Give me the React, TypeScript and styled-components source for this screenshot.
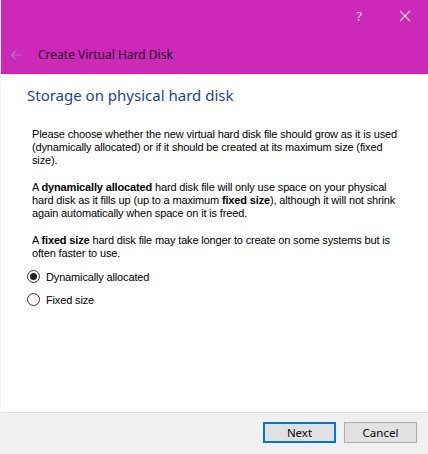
import React from "react";
import styled, { createGlobalStyle } from "styled-components";

const Global = createGlobalStyle`
  html, body { margin: 0; padding: 0; background: #ffffff; }
  * { box-sizing: border-box; }
`;

const Window = styled.div`
  width: 428px;
  height: 454px;
  display: flex;
  flex-direction: column;
  background: #ffffff;
  border-left: 1px solid #f4f4f4;
  font-family: "Liberation Sans", Arial, sans-serif;
`;

const Header = styled.div`
  height: 74px;
  background: #cc29b9;
  display: flex;
  flex-direction: column;
`;

const TopBar = styled.div`
  height: 31px;
  display: flex;
  justify-content: flex-end;
  align-items: center;
`;

const CaptionButton = styled.div`
  width: 46px;
  height: 31px;
  display: flex;
  align-items: center;
  justify-content: center;
  color: #f6d3f0;
  font-family: "Noto Sans", sans-serif;
  font-size: 13px;
`;

const TitleRow = styled.div`
  flex: 1;
  display: flex;
  align-items: center;
  padding-left: 9px;
  padding-top: 4px;
  gap: 16px;
`;

const Title = styled.div`
  font-family: "Noto Sans", sans-serif;
  font-size: 12px;
  color: #1e0a1c;
`;

const Content = styled.div`
  flex: 1;
  display: flex;
  flex-direction: column;
  padding: 10px 12px 0 26px;
`;

const Heading = styled.h1`
  margin: 0;
  font-family: "Noto Sans", sans-serif;
  font-weight: 400;
  font-size: 15px;
  line-height: 22px;
  color: #1c4591;
`;

const Body = styled.div`
  padding-left: 5px;
  padding-top: 22px;
  display: flex;
  flex-direction: column;
  gap: 14px;
`;

const Para = styled.p`
  margin: 0;
  font-size: 11px;
  line-height: 13px;
  color: #000;
  letter-spacing: -0.15px;
  white-space: nowrap;
`;

const RadioGroup = styled.div`
  display: flex;
  flex-direction: column;
  gap: 10px;
  padding-top: 10px;
`;

const RadioRow = styled.label`
  display: flex;
  align-items: center;
  gap: 6px;
  font-size: 11px;
  letter-spacing: -0.15px;
  color: #000;
  height: 13px;
`;

const RadioCircle = styled.span<{ $checked?: boolean }>`
  width: 13px;
  height: 13px;
  border-radius: 50%;
  border: 1px solid #333;
  background: #fff;
  display: flex;
  align-items: center;
  justify-content: center;
  &::after {
    content: "";
    width: 7px;
    height: 7px;
    border-radius: 50%;
    background: #222;
    display: ${(p) => (p.$checked ? "block" : "none")};
  }
`;

const Footer = styled.div`
  height: 42px;
  background: #f0f0f0;
  border-top: 1px solid #dfdfdf;
  display: flex;
  justify-content: flex-end;
  align-items: flex-start;
  gap: 8px;
  padding-right: 11px;
  padding-top: 9px;
`;

const Button = styled.button<{ $primary?: boolean }>`
  width: 73px;
  height: 21px;
  background: #e1e1e1;
  border: ${(p) => (p.$primary ? "2px solid #0078d7" : "1px solid #adadad")};
  font-family: "Noto Sans", sans-serif;
  font-size: 11.5px;
  color: #000;
  padding: 0;
  display: flex;
  align-items: center;
  justify-content: center;
`;

export default function App() {
  return (
    <>
      <Global />
      <Window>
        <Header>
          <TopBar>
            <CaptionButton>?</CaptionButton>
            <CaptionButton>
              <svg width="12" height="12" viewBox="0 0 12 12">
                <path d="M1 1L11 11M11 1L1 11" stroke="#f6d3f0" strokeWidth="1.2" />
              </svg>
            </CaptionButton>
          </TopBar>
          <TitleRow>
            <svg width="12" height="10" viewBox="0 0 12 10">
              <path d="M11.5 5H1.5M5.5 1L1.5 5L5.5 9" stroke="#b07aa8" strokeWidth="1.1" fill="none" />
            </svg>
            <Title>Create Virtual Hard Disk</Title>
          </TitleRow>
        </Header>
        <Content>
          <Heading>Storage on physical hard disk</Heading>
          <Body>
            <Para>
              Please choose whether the new virtual hard disk file should grow as it is used
              <br />
              (dynamically allocated) or if it should be created at its maximum size (fixed
              <br />
              size).
            </Para>
            <Para>
              A <b>dynamically allocated</b> hard disk file will only use space on your physical
              <br />
              hard disk as it fills up (up to a maximum <b>fixed size</b>), although it will not shrink
              <br />
              again automatically when space on it is freed.
            </Para>
            <Para>
              A <b>fixed size</b> hard disk file may take longer to create on some systems but is
              <br />
              often faster to use.
            </Para>
          </Body>
          <RadioGroup>
            <RadioRow>
              <RadioCircle $checked />
              Dynamically allocated
            </RadioRow>
            <RadioRow>
              <RadioCircle />
              Fixed size
            </RadioRow>
          </RadioGroup>
        </Content>
        <Footer>
          <Button $primary>Next</Button>
          <Button>Cancel</Button>
        </Footer>
      </Window>
    </>
  );
}
